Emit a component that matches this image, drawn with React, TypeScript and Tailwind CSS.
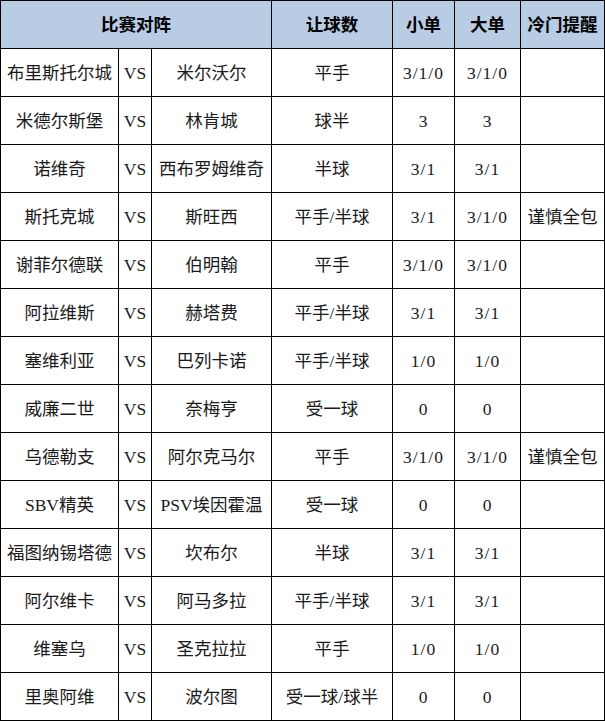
const rows: [string, string, string, string, string, string][] = [
  ["布里斯托尔城", "米尔沃尔", "平手", "3/1/0", "3/1/0", ""],
  ["米德尔斯堡", "林肯城", "球半", "3", "3", ""],
  ["诺维奇", "西布罗姆维奇", "半球", "3/1", "3/1", ""],
  ["斯托克城", "斯旺西", "平手/半球", "3/1", "3/1/0", "谨慎全包"],
  ["谢菲尔德联", "伯明翰", "平手", "3/1/0", "3/1/0", ""],
  ["阿拉维斯", "赫塔费", "平手/半球", "3/1", "3/1", ""],
  ["塞维利亚", "巴列卡诺", "平手/半球", "1/0", "1/0", ""],
  ["威廉二世", "奈梅亨", "受一球", "0", "0", ""],
  ["乌德勒支", "阿尔克马尔", "平手", "3/1/0", "3/1/0", "谨慎全包"],
  ["SBV精英", "PSV埃因霍温", "受一球", "0", "0", ""],
  ["福图纳锡塔德", "坎布尔", "半球", "3/1", "3/1", ""],
  ["阿尔维卡", "阿马多拉", "平手/半球", "3/1", "3/1", ""],
  ["维塞乌", "圣克拉拉", "平手", "1/0", "1/0", ""],
  ["里奥阿维", "波尔图", "受一球/球半", "0", "0", ""],
];

const cell =
  "flex items-center justify-center h-[48px] pt-[2px] border-r border-b border-black whitespace-nowrap";
const head = `${cell} bg-[#b8cce4] font-bold text-black`;

export default function App() {
  return (
    <div
      className="w-[605px] bg-white text-[#1a1a1a] text-[17.5px]"
      style={{ fontFamily: '"Liberation Serif", "Noto Sans CJK SC", serif' }}
    >
      <div className="grid grid-cols-[118px_33px_120px_121px_62px_66px_84px] border-t border-l border-black">
        <div className={`${head} col-span-3`}>比赛对阵</div>
        <div className={head}>让球数</div>
        <div className={head}>小单</div>
        <div className={head}>大单</div>
        <div className={head}>冷门提醒</div>
        {rows.map((r) => (
          <div key={r[0]} className="contents">
            <div className={cell}>{r[0]}</div>
            <div className={cell}>VS</div>
            <div className={cell}>{r[1]}</div>
            <div className={cell}>{r[2]}</div>
            <div className={`${cell} tracking-[1px]`}>{r[3]}</div>
            <div className={`${cell} tracking-[1px]`}>{r[4]}</div>
            <div className={cell}>{r[5]}</div>
          </div>
        ))}
      </div>
    </div>
  );
}
